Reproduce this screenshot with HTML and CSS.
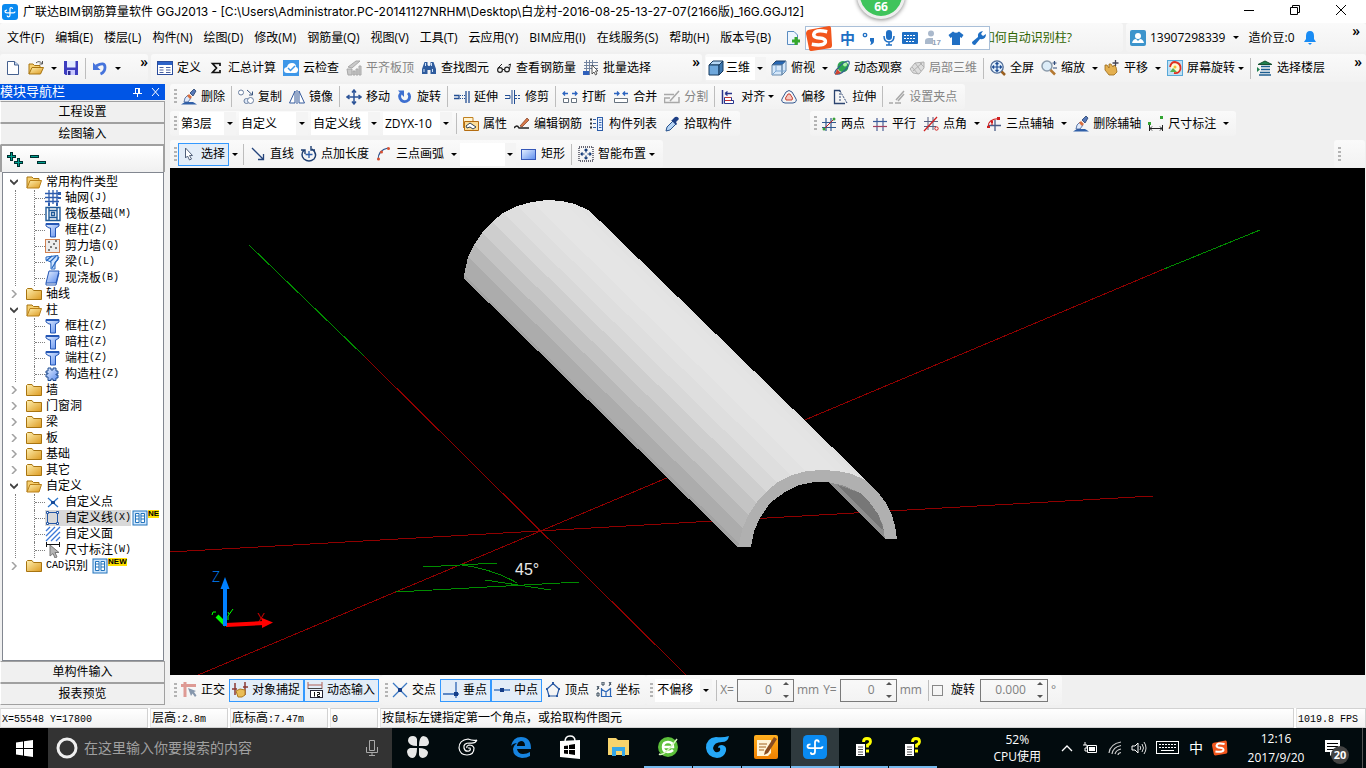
FILE: index.html
```html
<!DOCTYPE html>
<html lang="zh-CN">
<head>
    <meta charset="UTF-8">
    <meta name="viewport" content="width=device-width, initial-scale=1.0">
    <title>广联达BIM钢筋算量软件 GGJ2013</title>
    <link rel="stylesheet" href="styles.css">
</head>
<body>
    <!-- Iconos compartidos -->
    <svg class="sprite" width="0" height="0" aria-hidden="true">
        <defs>
            <linearGradient id="g-gold" x1="0" y1="0" x2="1" y2="1"><stop offset="0" stop-color="#fff0b0"/><stop offset="1" stop-color="#dc9a20"/></linearGradient>
            <linearGradient id="g-blue" x1="0" y1="0" x2="1" y2="1"><stop offset="0" stop-color="#e8f1ff"/><stop offset="1" stop-color="#5b8cee"/></linearGradient>
            <linearGradient id="g-orange" x1="0" y1="0" x2="0" y2="1"><stop offset="0" stop-color="#ffb020"/><stop offset="1" stop-color="#f08000"/></linearGradient>
        </defs>
        <symbol id="app" viewBox="0 0 16 16"><rect width="16" height="16" rx="3" fill="#0a8af0"/><path d="M10.500 5Q10.500 3.500 9.200 3.500Q8 3.500 8 5V11Q8 12.800 6.500 12.800Q5.200 12.800 5.200 11.500M5 6.200Q3 6.200 3 7.500Q3 8.800 5 8.800H11.500Q13 8.800 13 7.500" fill="none" stroke="#fff" stroke-width="1.200"/></symbol>
        <symbol id="new" viewBox="0 0 16 16"><path d="M2.500 1.500H9.500L13.500 5V14.500H2.500Z" fill="#fff" stroke="#46618f"/><path d="M9.500 1.500V5H13.500" fill="#c5d7f0" stroke="#46618f"/></symbol>
        <symbol id="folder-open" viewBox="0 0 16 16"><path d="M1 14V3H6L7.500 4.500H13V7" fill="#f7d070" stroke="#a87410"/><path d="M1 14L4 6.500H15.500L13 14Z" fill="url(#g-gold)" stroke="#b98018"/></symbol>
        <symbol id="open" viewBox="0 0 16 16"><path d="M1 14V4H5L6.500 5.500H12V8" fill="#f7d070" stroke="#a87410"/><path d="M1 14L4 7.500H15.500L12.500 14Z" fill="url(#g-gold)" stroke="#a87410"/><path d="M8 3Q11 0 14 3.500M14.500 1V4H11.500" fill="none" stroke="#555"/></symbol>
        <symbol id="folder" viewBox="0 0 16 16"><path d="M.5 13.500V3.500L1.500 2.500H6L7.500 4.500H15.500V13.500Z" fill="url(#g-gold)" stroke="#a87410"/></symbol>
        <symbol id="save" viewBox="0 0 16 16"><path d="M1 1H15V15H2.500L1 13.500Z" fill="#3d3dbf"/><path d="M4 1H12.500V7.500H4Z" fill="#e4ecff"/><path d="M4 10H12V15H4Z" fill="#c8c8ff"/><path d="M5 11H7.500V15H5Z" fill="#2d2d90"/></symbol>
        <symbol id="undo" viewBox="0 0 16 16"><path d="M4 6Q13 1 13 7.500Q13 12 8.500 14" fill="none" stroke="#4674dc" stroke-width="2.800"/><path d="M1 2.500V10H8.500Z" fill="#4674dc"/></symbol>
        <symbol id="define" viewBox="0 0 16 16"><rect x=".5" y="1.500" width="15" height="13" fill="#fff" stroke="#2a4c9c"/><path d="M1 2H15V5H1Z" fill="#2c62c8"/><path d="M2.500 7.500H6.500M9 7.500H13.500M2.500 10H6.500M9 10H13.500M2.500 12.500H6.500M9 12.500H13.500" stroke="#4860a0"/></symbol>
        <symbol id="sum" viewBox="0 0 16 16"><path d="M12 6V3.500H4.500L8.500 8L4.500 12.500H12V10" fill="none" stroke="#111" stroke-width="1.700"/></symbol>
        <symbol id="cloud" viewBox="0 0 16 16"><rect width="16" height="16" fill="#3e97e8"/><path d="M4 13Q1 13 1 10Q1 7.500 4 7Q5 3 9 3Q13 3 13 7Q15.500 8 15 10.500Q14.500 13 12 13Z" fill="#fff"/><path d="M5 8L7.500 10.500L12 6" fill="none" stroke="#3e97e8" stroke-width="1.500"/></symbol>
        <symbol id="flat" viewBox="0 0 16 16"><path d="M2 7L10 1L14 1L6 8ZM1 9H6V15H2ZM7 11H9V15H7ZM10 9H12V15H10ZM13 6H15V15H13Z" fill="#c9c9c9" stroke="#a8a8a8"/></symbol>
        <symbol id="find" viewBox="0 0 16 16"><path d="M3.500 2H6.500V5L7.500 6H8.500L9.500 5V2H12.500L15 9V14H9.500V10H6.500V14H1V9Z" fill="#2f5c9e"/><path d="M3 9V12M11.500 9V12M4.500 3V6M10.500 3V6" stroke="#cfe2fa"/></symbol>
        <symbol id="glasses" viewBox="0 0 16 16"><circle cx="4" cy="10" r="2.400" fill="none" stroke="#222" stroke-width="1.200"/><circle cx="11" cy="9.500" r="2.400" fill="none" stroke="#222" stroke-width="1.200"/><path d="M6.500 9.500H8.500M2 8L6 4M13.500 9L14.500 4L12.500 5" fill="none" stroke="#222"/></symbol>
        <symbol id="batch" viewBox="0 0 16 16"><path d="M1 2.500H15M1 5.500H15M1 8.500H15M3.500 0V15M6.500 0V15M9.500 0V8" stroke="#7385a0"/><path d="M0 11H6V15H0Z" fill="#2f60bb"/><path d="M9 5V14L11 12L12.500 15L14 14L12.500 11H15Z" fill="#fff" stroke="#333" stroke-width=".8"/></symbol>
        <symbol id="cube" viewBox="0 0 16 16"><path d="M1 5L5 1H15L11 5Z" fill="#b6d7f5" stroke="#173a5f"/><path d="M1 5H11V15H1Z" fill="#6fa8dc" stroke="#173a5f"/><path d="M11 5L15 1V11L11 15Z" fill="#3f78b0" stroke="#173a5f"/></symbol>
        <symbol id="topview" viewBox="0 0 16 16"><path d="M1 5L5 1H15L11 5Z" fill="#2968b4" stroke="#244468"/><path d="M1 5H11V15H1ZM11 5L15 1V11L11 15Z" fill="#d6e8fa" stroke="#6688aa"/><path d="M5 5V11H15M5 11L1 15" fill="none" stroke="#7aa6d2"/></symbol>
        <symbol id="orbit" viewBox="0 0 16 16"><circle cx="9" cy="6.500" r="5.500" fill="#2ea54e"/><circle cx="11" cy="4.500" r="2" fill="#aef0a8"/><path d="M2 14Q-1 13 4 8Q10 1 14 1Q17 2 13 8Q7 15 2 14" fill="none" stroke="#30618e" stroke-width="1.200"/><path d="M3 9L7 13L1 15Z" fill="#d04430"/></symbol>
        <symbol id="partview" viewBox="0 0 16 16"><path d="M1 9L6 3L15 2L15 8L10 14L4 13ZM4 11L13 3M6 3L12 11M3 7L9 14M10 2L15 7" fill="#ddd" stroke="#b0b0b0"/></symbol>
        <symbol id="full" viewBox="0 0 16 16"><circle cx="7" cy="7" r="6.200" fill="#e2effb" stroke="#4d6a96" stroke-width="1.300"/><path d="M7 2.500V11.500M2.500 7H11.500M5.500 4L7 2.500L8.500 4M5.500 10L7 11.500L8.500 10M4 5.500L2.500 7L4 8.500M10 5.500L11.500 7L10 8.500" fill="none" stroke="#1d4c94" stroke-width="1.200"/><path d="M11.500 11.500L15 15" stroke="#9a6020" stroke-width="2.500"/></symbol>
        <symbol id="zoom" viewBox="0 0 16 16"><circle cx="6" cy="6" r="5" fill="#dcecf8" stroke="#8c9cac" stroke-width="1.500"/><path d="M9.500 10L14 14.500" stroke="#b47830" stroke-width="2.500"/><path d="M13.500 1V5M11.500 3H15.500M12 8H16" stroke="#334e7c" stroke-width="1.200"/></symbol>
        <symbol id="hand" viewBox="0 0 16 16"><path d="M1 5L3 5L5 8L5 4L7 4L9 7L10 5L12 7L13 12L10 15H5L1 10Z" fill="#e4b050" stroke="#9a6a18" stroke-width=".8"/><path d="M11.500 0V6M8.500 3H14.500" stroke="#445" stroke-width="1.300"/></symbol>
        <symbol id="screenrot" viewBox="0 0 16 16"><rect x=".5" y=".5" width="15" height="15" fill="#bfe0f4" stroke="#58a8d8"/><path d="M3 7Q4 2 8 2Q14 3 13.500 9Q12 14 7 13" fill="#fff8d8" stroke="#e03020" stroke-width="1.800"/><path d="M3 12L6 8L10 12Z" fill="#55b050"/><circle cx="8" cy="7" r="1.500" fill="#f4c030"/></symbol>
        <symbol id="floor" viewBox="0 0 16 16"><path d="M1 4.500L8 1L15 4.500Z" fill="#208050" stroke="#145030"/><path d="M4 6.500H13M4 9.500H13M3 12.500H13M2 15H14" stroke="#1d5e90" stroke-width="1.500"/><path d="M0 7L3 9.500L0 12" fill="#208050"/></symbol>
        <symbol id="erase" viewBox="0 0 16 16"><path d="M0 15.500H16L12 13H4Z" fill="#2f5fa8"/><path d="M4 9L7 6L10 9L7 13H3Z" fill="#dfe9fa" stroke="#3a5a94" stroke-width=".8"/><path d="M6 7L8 5L11 8L9 10Z" fill="#d87040"/><path d="M9 4L13 0L15 2L12 7Z" fill="#5678b8" stroke="#24406c" stroke-width=".8"/></symbol>
        <symbol id="copy" viewBox="0 0 16 16"><circle cx="3" cy="3.500" r="2.500" fill="#fff" stroke="#6a7fa0"/><circle cx="8.500" cy="12" r="2.500" fill="#dce7f6" stroke="#6a7fa0"/><circle cx="12.500" cy="11.500" r="3" fill="#fff" stroke="#6a7fa0"/><path d="M9 1L14 5.500M14.500 2.500V6H11" fill="none" stroke="#3a557f"/></symbol>
        <symbol id="mirror" viewBox="0 0 16 16"><path d="M6 2V14H.5ZM10 2V14H15.500Z" fill="#fff" stroke="#355a9c"/><path d="M8 1V15" stroke="#355a9c"/></symbol>
        <symbol id="move" viewBox="0 0 16 16"><path d="M8 1V15M1 8H15M6 3.500L8 1L10 3.500M6 12.500L8 15L10 12.500M3.500 6L1 8L3.500 10M12.500 6L15 8L12.500 10" fill="none" stroke="#2d5498" stroke-width="1.500"/></symbol>
        <symbol id="rotate" viewBox="0 0 16 16"><path d="M4 4Q1 8 4.500 11.500Q8 14 11.500 11Q14 7 11 4" fill="none" stroke="#3d6fd0" stroke-width="2.800"/><path d="M1 1.500H7V8Z" fill="#3d6fd0"/></symbol>
        <symbol id="extend" viewBox="0 0 16 16"><path d="M0 6.500H5V9.500H0M12 2V14M15 2V14" fill="none" stroke="#244f94" stroke-width="1.300"/><path d="M6 6.500H11M6 9.500H11" stroke="#244f94" stroke-dasharray="1 1"/></symbol>
        <symbol id="trim" viewBox="0 0 16 16"><path d="M0 6.500H5V9.500H0M7 1V15M9.500 1V15" fill="none" stroke="#244f94"/><path d="M10 6.500H16M10 9.500H16" stroke="#244f94" stroke-dasharray="2 1"/></symbol>
        <symbol id="break" viewBox="0 0 16 16"><path d="M1 4.500H6M3 2.500L1 4.500L3 6.500M15 4.500H10M13 2.500L15 4.500L13 6.500" fill="none" stroke="#2d65c0" stroke-width="1.300"/><path d="M1.500 9.500H6.500V13.500H1.500ZM9.500 9.500H14.500V13.500H9.500Z" fill="#fff" stroke="#66727f"/></symbol>
        <symbol id="join" viewBox="0 0 16 16"><path d="M1 4.500H6M4 2.500L6 4.500L4 6.500M15 4.500H10M12 2.500L10 4.500L12 6.500" fill="none" stroke="#2d65c0" stroke-width="1.300"/><path d="M1.500 9.500H14.500V13.500H1.500Z" fill="#fff" stroke="#66727f"/></symbol>
        <symbol id="split" viewBox="0 0 16 16"><path d="M0 5.500H10M0 9H6M.5 9V13.500H15V8M15 2L6 12" fill="none" stroke="#a8a8a8" stroke-width="1.500"/></symbol>
        <symbol id="align" viewBox="0 0 16 16"><path d="M1.500 1V15" stroke="#28348c" stroke-width="1.500"/><path d="M4 4.500H11M4 4.500L6.500 2.500M4 4.500L6.500 6.500" fill="none" stroke="#28348c" stroke-width="1.300"/><path d="M3.500 8.500H10.500V11.500H3.500ZM3.500 11.500H12.500V14.500H3.500Z" fill="#fff" stroke="#28348c"/><path d="M4 8.500H10M4 11.500H10" stroke="#c03030"/></symbol>
        <symbol id="offset" viewBox="0 0 16 16"><path d="M4 14Q-1 13 1.500 9L5 3Q8 0 11 3L14.500 9Q17 13 12 14Z" fill="none" stroke="#345890"/><path d="M5 11L4.500 9L7 5H9L11.500 9L11 11Z" fill="#f6c8c0" stroke="#c84030"/></symbol>
        <symbol id="stretch" viewBox="0 0 16 16"><path d="M8 1.500H2.500V14.500H13" fill="none" stroke="#2b4470" stroke-width="1.300"/><path d="M8 1V12M8 2L15 14" stroke="#2b4470" stroke-dasharray="2 1"/></symbol>
        <symbol id="grip" viewBox="0 0 16 16"><path d="M0 14H4M6 14H12M7 11L15 2M9 12L15 5" stroke="#a8a8a8" stroke-width="1.500"/></symbol>
        <symbol id="props" viewBox="0 0 16 16"><path d="M.5 12V1.500H10V5" fill="#fff3d0" stroke="#c08020"/><path d="M1.500 14.500H15.500V5.500H1.500Z" fill="#fbdc96" stroke="#b46c10"/><path d="M3 10L7 7L13 11L10 13L7 11L4 12Z" fill="#fff" stroke="#345"/></symbol>
        <symbol id="rebar" viewBox="0 0 16 16"><path d="M0 12Q3 8 5 12H15" fill="none" stroke="#222" stroke-width="1.500"/><path d="M6 10L13 2L15 4L8 11Z" fill="#d87848" stroke="#7a3a20" stroke-width=".7"/></symbol>
        <symbol id="list" viewBox="0 0 16 16"><path d="M1 3.500H3M1 7.500H3M1 11.500H3" stroke="#333" stroke-width="2"/><path d="M4 3.500H7M4 7.500H7M4 11.500H7" stroke="#345ea0"/><rect x="8.500" y="1.500" width="5" height="13" fill="#eaf2ff" stroke="#2d5da8"/><path d="M10 4H12.500M10 6.500H12.500M10 9H12.500M10 11.500H12.500" stroke="#2d5da8"/></symbol>
        <symbol id="pick" viewBox="0 0 16 16"><path d="M2 15L3 11L9 5L12 8L6 14Z" fill="#b6d4f4" stroke="#24508c"/><path d="M8 4L11 1Q14 0 15 3L12 6L13 8L12 9L7 4Z" fill="#1e3f84"/></symbol>
        <symbol id="twopt" viewBox="0 0 16 16"><path d="M5 2V15M10 2V15M1 6.500H15M1 11.500H15" stroke="#31598f" stroke-width="1.200"/><path d="M2 14L14 2" stroke="#c02020"/><circle cx="13" cy="3" r="1.500" fill="#3aa03a"/><circle cx="3" cy="13" r="1.500" fill="#3aa03a"/></symbol>
        <symbol id="parallel" viewBox="0 0 16 16"><path d="M5 2V15M11 2V15" stroke="#4b5f95" stroke-width="1.200"/><path d="M1 5.500H15" stroke="#365c9c" stroke-width="1.200"/><path d="M1 10.500H15" stroke="#a04060" stroke-width="1.200"/></symbol>
        <symbol id="angle" viewBox="0 0 16 16"><path d="M5 1V14M10 1V14M1 5.500H15M1 10.500H13" stroke="#555f80"/><path d="M1 15L14 1" stroke="#d02020" stroke-width="1.300"/><circle cx="13.500" cy="12.500" r="1.700" fill="none" stroke="#d02020"/></symbol>
        <symbol id="threeaxis" viewBox="0 0 16 16"><path d="M9 4V15M2 9.500H15" stroke="#495b85" stroke-width="1.300"/><path d="M2 11Q2 3 13 2.500M6 4V9" fill="none" stroke="#d02020" stroke-width="1.200"/><path d="M1 10H4V12H1ZM5 5H7V7H5ZM11 1H14V4H11Z" fill="#d02020"/></symbol>
        <symbol id="dim" viewBox="0 0 16 16"><path d="M1.500 9V15M14.500 9V15M2 12.500H14M4 10.500L2 12.500L4 14.500M12 10.500L14 12.500L12 14.500" fill="none" stroke="#222"/><path d="M0 6H3V9H0ZM12 0H15V3H12Z" fill="#31a431"/></symbol>
        <symbol id="arrow" viewBox="0 0 16 16"><path d="M4.500 2V12L6.500 10L8.500 14L10.500 13L8.500 9.500H11.500Z" fill="#fff" stroke="#52617a"/></symbol>
        <symbol id="line" viewBox="0 0 16 16"><path d="M2 2L13 13M13.500 8V13.500H8" fill="none" stroke="#25447c" stroke-width="1.300"/></symbol>
        <symbol id="ptlen" viewBox="0 0 16 16"><path d="M8 5V12M4.500 8.500H11.500" stroke="#2d5da8" stroke-width="1.300"/><path d="M3 4Q-1 9 3 13Q8 17 13 13Q17 8 11 3M0 4H4V8M10 0V4H14" fill="none" stroke="#1d3d70" stroke-width="1.400"/></symbol>
        <symbol id="arc" viewBox="0 0 16 16"><path d="M2 14Q2 4 12 2" fill="none" stroke="#31548e" stroke-width="1.200"/><circle cx="2.500" cy="13" r="1.500" fill="#d85030"/><circle cx="5.500" cy="6" r="1.500" fill="#d85030"/><circle cx="12.500" cy="2.500" r="1.500" fill="#d85030"/></symbol>
        <symbol id="rect" viewBox="0 0 16 16"><rect x=".5" y="3.500" width="14" height="10" fill="url(#g-blue)" stroke="#3557b8"/></symbol>
        <symbol id="smart" viewBox="0 0 16 16"><rect x="1" y="1" width="14" height="14" fill="none" stroke="#334" stroke-width="1.300" stroke-dasharray="1 1"/><path d="M8 3V6.500M8 9.500V13M3 8H6.500M9.500 8H13M6.500 4.500L8 3L9.500 4.500M6.500 11.500L8 13L9.500 11.500M4.500 6.500L3 8L4.500 9.500M11.500 6.500L13 8L11.500 9.500" fill="none" stroke="#153c78" stroke-width="1.200"/></symbol>
        <symbol id="ortho" viewBox="0 0 16 16"><path d="M4 0V15M0 3.500H15" stroke="#de9a94" stroke-width="3"/><path d="M7 6L10 14L11.500 11.500L14 15L15.500 13.500L13 10L15 9Z" fill="#8797ac"/></symbol>
        <symbol id="snap" viewBox="0 0 16 16"><path d="M3 1V13M13 0V13M0 7H5M11 5H16" stroke="#8c3a34" stroke-width="1.500"/><path d="M4 9L8 7L13 8V13L10 15H6Z" fill="#e9bd57" stroke="#ae7a20"/></symbol>
        <symbol id="cross" viewBox="0 0 16 16"><path d="M1 1L15 15M15 1L1 15" stroke="#3b79c4" stroke-width="1.300"/><rect x="6" y="6" width="4" height="4" fill="#163e88"/></symbol>
        <symbol id="perp" viewBox="0 0 16 16"><path d="M13 0V16M0 12H16" stroke="#2f66b4" stroke-width="1.300"/><rect x="11" y="10" width="4" height="4" fill="#163e88"/></symbol>
        <symbol id="mid" viewBox="0 0 16 16"><path d="M0 8H16" stroke="#2f66b4" stroke-width="1.300"/><rect x="6" y="6" width="4" height="4" fill="#163e88"/></symbol>
        <symbol id="vertex" viewBox="0 0 16 16"><path d="M8 1.500L14 7L12 14H4L2 7Z" fill="none" stroke="#2b5aa4" stroke-width="1.200"/><path d="M7 0H9V3H7ZM1 6H3V8H1ZM13 6H15V8H13ZM3 13H5V15H3ZM11 13H13V15H11Z" fill="#2b5aa4"/></symbol>
        <symbol id="coord" viewBox="0 0 16 16"><path d="M5.500 6V14.500H16M5 7L10 10L15 6M10 10V14M14.500 7V14" fill="none" stroke="#2b66b8" stroke-width="1.200"/><path d="M1 4L3 7M3 4L1 8M6 0H8V3H6ZM13 0L15 3M15 0L13 4M1 11H3V14H1Z" fill="none" stroke="#345"/></symbol>
        <!-- árbol -->
        <symbol id="t-grid" viewBox="0 0 16 16"><path d="M4 0V14M8 0V14M12 0V14M0 3.500H14M0 7.500H14M0 11.500H14" stroke="#2c5cae" stroke-width="1.300"/><path d="M13 2H16V5H13ZM13 7H16V9H13ZM3 13H5V16H3ZM11 13H13V16H11Z" fill="#2c5cae"/></symbol>
        <symbol id="t-raft" viewBox="0 0 16 16"><path d="M1 1.500H15V14.500H1ZM4 4.500H12V11.500H4ZM4 1V4M12 1V4M4 12V15M12 12V15M6.500 6.500H9.500V9.500H6.500Z" fill="none" stroke="#1f5a98" stroke-width="1.400"/></symbol>
        <symbol id="t-col" viewBox="0 0 16 16"><path d="M1 1.500H14V4L11 6H10.500V15H5.500V6H4L1 4Z" fill="url(#g-blue)" stroke="#2456b4"/><path d="M1 2H14" stroke="#2456b4" stroke-width="2"/></symbol>
        <symbol id="t-wall" viewBox="0 0 16 16"><rect x=".5" y="1.500" width="14" height="13" fill="#ececec" stroke="#d08050"/><path d="M3 4H5M8 6H10M5 9H7M10 10H12M3 12H5M10 3H12" stroke="#555" stroke-width="1.500"/></symbol>
        <symbol id="t-beam" viewBox="0 0 16 16"><path d="M1 3L13 1.500V6L10 8V15H6V8L1 6Z" fill="#cfe4ff" stroke="#2768c0"/><path d="M1 7L7 2M7 14L14 3M5 8L11 2" stroke="#2768c0" stroke-width="1.300"/></symbol>
        <symbol id="t-slab" viewBox="0 0 16 16"><path d="M4 1H14L11 13H1Z" fill="url(#g-blue)" stroke="#2456b4"/><path d="M1 13V15H11L14 3" fill="none" stroke="#2456b4"/></symbol>
        <symbol id="t-struct" viewBox="0 0 16 16"><path d="M3 2H6V4H8V2H11V5H13V8H11V9H13V12H11V14.500H8V13H6V14.500H3V11H1V8H3V7H1V5H3Z" fill="url(#g-blue)" stroke="#1d4a90"/></symbol>
        <symbol id="t-point" viewBox="0 0 16 16"><path d="M3 4L13 13M13 4L3 13" stroke="#2c74c8" stroke-width="1.300"/><path d="M6 7H10V10H6Z" fill="#164a98"/></symbol>
        <symbol id="t-line" viewBox="0 0 16 16"><path d="M2.500 2.500H12.500V13.500H2.500Z" fill="none" stroke="#2456a4"/><path d="M1.500 1.500H3.500V3.500H1.500ZM11.500 1.500H13.500V3.500H11.500ZM1.500 12.500H3.500V14.500H1.500ZM11.500 12.500H13.500V14.500H11.500Z" fill="#fff" stroke="#2456a4"/></symbol>
        <symbol id="t-face" viewBox="0 0 16 16"><path d="M1 5L5 1M1 10L10 1M1 15L15 1M6 15L15 6M11 15L15 11" stroke="#3b78d8" stroke-width="1.300"/></symbol>
        <symbol id="t-dim" viewBox="0 0 16 16"><path d="M1.500 0V5M14.500 0V5M1 2.500H15" stroke="#111"/><path d="M5 3V14L8 11.500L10 16L12 15L10 10.500H14Z" fill="#b5b5b5" stroke="#777"/></symbol>
        <symbol id="t-book" viewBox="0 0 16 16"><rect x="1" y="1" width="14" height="14" fill="#cfe6fc" stroke="#2374bd"/><path d="M3.500 3.500H7V12.500H3.500ZM9 3.500H12.500V12.500H9ZM4 6H7M4 9H7M9 6H12M9 9H12" fill="#fff" stroke="#2374bd"/></symbol>
        <symbol id="minus" viewBox="0 0 8 8"><path d="M0 2L4 6L8 2" fill="none" stroke="#404040" stroke-width="1.800"/></symbol>
        <symbol id="plus" viewBox="0 0 8 8"><path d="M2 0L6 4L2 8" fill="none" stroke="#a0a0a0" stroke-width="1.500"/></symbol>
        <!-- barra de tareas -->
        <symbol id="sogou" viewBox="0 0 28 28"><path d="M3 5L24 1Q26 1 26 4L27 21Q27 24 24 24L6 27Q3 27 3 24L0 9Q0 6 3 5Z" fill="#f2561d"/><path d="M22 7Q9 4 8 10Q8 13 14 13.500Q21 14 20 18Q18 22 6 20" fill="none" stroke="#fff" stroke-width="3.600"/></symbol>
        <symbol id="help" viewBox="0 0 24 24"><path d="M4 9H13V21H4Z" fill="#fff"/><path d="M6 12H11M6 14.500H11M6 17H11M6 19.500H11" stroke="#555"/><path d="M11.500 7Q11.500 3.500 15 3.500Q18.500 3.500 18.500 6.500Q18.500 9 15.500 10V12.500" fill="none" stroke="#ff0" stroke-width="2.800"/><path d="M14 14.500H17V17.500H14Z" fill="#ff0"/></symbol>
        <symbol id="swirl" viewBox="0 0 24 24"><path d="M22 5Q20 9 15 8Q8 8 9 13Q10 17 14 16Q16 15 15 13H13M22 5Q18 6 13 4Q4 5 4 13Q5 20 12 20Q19 20 19 13Q18 10 14 10Q11 11 12 13" fill="none" stroke="currentColor" stroke-width="1.200"/></symbol>
    </svg>

    <header class="titlebar">
        <svg class="icon"><use href="#app"/></svg>
        <h1>广联达BIM钢筋算量软件 GGJ2013 - [C:\Users\Administrator.PC-20141127NRHM\Desktop\白龙村-2016-08-25-13-27-07(2166版)_16G.GGJ12]</h1>
        <div class="window-controls">
            <button type="button" aria-label="最小化"><svg width="12" height="12"><path d="M1 6.500H11" stroke="#000"/></svg></button>
            <button type="button" aria-label="还原"><svg width="12" height="12"><path d="M1.500 3.500H8.500V10.500H1.500ZM3.500 3.500V1.500H10.500V8.500H8.500" fill="none" stroke="#000"/></svg></button>
            <button type="button" aria-label="关闭"><svg width="12" height="12"><path d="M1 1L11 11M11 1L1 11" stroke="#000"/></svg></button>
        </div>
        <div class="ball">66</div>
    </header>

    <div class="bar-row menu-row">
        <nav class="bar menu">
            <a href="#">文件(F)</a><a href="#">编辑(E)</a><a href="#">楼层(L)</a><a href="#">构件(N)</a><a href="#">绘图(D)</a><a href="#">修改(M)</a><a href="#">钢筋量(Q)</a><a href="#">视图(V)</a><a href="#">工具(T)</a><a href="#">云应用(Y)</a><a href="#">BIM应用(I)</a><a href="#">在线服务(S)</a><a href="#">帮助(H)</a><a href="#">版本号(B)</a>
            <svg class="icon" viewBox="0 0 16 16"><path d="M2.500 1.500H9L12.500 5V14.500H2.500Z" fill="#eef6ff" stroke="#5a8cc0"/><path d="M11 7V15M7 11H15" stroke="#35a82a" stroke-width="3"/></svg>
            <a href="#" class="tip">如何自动识别柱?</a>
        </nav>
        <div class="bar account">
            <svg class="icon" viewBox="0 0 16 16"><rect width="16" height="16" rx="2" fill="#3c94cc"/><circle cx="8" cy="6" r="3" fill="#fff"/><path d="M2 13Q3 9 6 9L8 11L10 9Q13 9 14 13Z" fill="#fff"/></svg>
            <button type="button" class="phone">13907298339<i class="caret"></i></button>
            <span>造价豆:0</span>
            <svg class="bell" width="14" height="16" viewBox="0 0 14 16"><path d="M7 1Q11 1 11 6V9L13 12H1L3 9V6Q3 1 7 1ZM5 13H9L7 15Z" fill="#1a8cf4"/></svg>
            <span class="more">»</span>
        </div>
        <div class="ime">
            <svg class="ime-logo" viewBox="0 0 28 28"><use href="#sogou"/></svg>
            <b>中</b>
            <svg width="14" height="16" viewBox="0 0 14 16"><circle cx="3" cy="5" r="1.700" fill="none" stroke="#1f6fc4" stroke-width="1.300"/><path d="M8 8H12V11Q12 14 8 15Q10 12 8 11Z" fill="#1f6fc4"/></svg>
            <svg width="12" height="16" viewBox="0 0 12 16"><rect x="3" y="0" width="6" height="10" rx="3" fill="#1f6fc4"/><path d="M1 6Q1 12 6 12Q11 12 11 6M6 12V15M3 15H9" fill="none" stroke="#1f6fc4" stroke-width="1.500"/></svg>
            <svg width="16" height="16" viewBox="0 0 16 16"><rect y="2" width="16" height="12" rx="1" fill="#1f6fc4"/><path d="M2 5.500H14M2 8.500H14M4 11.500H12" stroke="#fff" stroke-dasharray="2 1"/></svg>
            <svg width="16" height="16" viewBox="0 0 16 16"><circle cx="6" cy="3.500" r="3" fill="#aab9cc"/><path d="M0 14V11Q0 8 4 8H8V14Z" fill="#aab9cc"/><text class="day" x="7" y="15">17</text></svg>
            <svg width="16" height="16" viewBox="0 0 16 16"><path d="M5 1.500Q8 4 11 1.500L15.500 5L13.500 8L12 7V15H4V7L2.500 8L.5 5Z" fill="#1f6fc4"/></svg>
            <svg width="16" height="16" viewBox="0 0 16 16"><path d="M1 12L7 7Q6 2 12 1L10 4L12 6L15 4Q15 10 9 9L4 15Q1 15 1 12Z" fill="#1f6fc4"/></svg>
        </div>
    </div>

    <div class="bar-row tools-row">
        <div class="bar bar-file">
            <button type="button" class="tool" aria-label="新建"><svg class="icon"><use href="#new"/></svg></button>
            <button type="button" class="tool" aria-label="打开"><svg class="icon"><use href="#open"/></svg></button><i class="drop"></i>
            <button type="button" class="tool" aria-label="保存"><svg class="icon"><use href="#save"/></svg></button><i class="sep"></i>
            <button type="button" class="tool" aria-label="撤销"><svg class="icon"><use href="#undo"/></svg></button><i class="drop"></i>
            <span class="more">»</span>
        </div>
        <div class="bar bar-main">
            <button type="button" class="tool"><svg class="icon"><use href="#define"/></svg>定义</button>
            <button type="button" class="tool"><svg class="icon"><use href="#sum"/></svg>汇总计算</button>
            <button type="button" class="tool"><svg class="icon"><use href="#cloud"/></svg>云检查</button>
            <button type="button" class="tool off"><svg class="icon"><use href="#flat"/></svg>平齐板顶</button>
            <button type="button" class="tool"><svg class="icon"><use href="#find"/></svg>查找图元</button>
            <button type="button" class="tool"><svg class="icon"><use href="#glasses"/></svg>查看钢筋量</button>
            <button type="button" class="tool"><svg class="icon"><use href="#batch"/></svg>批量选择</button>
            <span class="more">»</span>
        </div>
        <div class="bar bar-view">
            <label class="combo view"><svg class="icon"><use href="#cube"/></svg><select aria-label="视图"><option>三维</option></select></label>
            <button type="button" class="tool"><svg class="icon"><use href="#topview"/></svg>俯视</button><i class="drop"></i>
            <button type="button" class="tool"><svg class="icon"><use href="#orbit"/></svg>动态观察</button>
            <button type="button" class="tool off"><svg class="icon"><use href="#partview"/></svg>局部三维</button><i class="sep"></i>
            <button type="button" class="tool"><svg class="icon"><use href="#full"/></svg>全屏</button>
            <button type="button" class="tool"><svg class="icon"><use href="#zoom"/></svg>缩放</button><i class="drop"></i>
            <button type="button" class="tool"><svg class="icon"><use href="#hand"/></svg>平移</button><i class="drop"></i>
            <button type="button" class="tool"><svg class="icon"><use href="#screenrot"/></svg>屏幕旋转<i class="caret"></i></button><i class="sep"></i>
            <button type="button" class="tool"><svg class="icon"><use href="#floor"/></svg>选择楼层</button>
            <span class="more">»</span>
        </div>
    </div>

    <div class="workspace">
        <aside class="sidebar">
            <div class="side-title">模块导航栏
                <svg width="9" height="10"><path d="M2 1.500H7M2.500 1V6M5.500 1V6M6.500 1V6M0 6.500H9M4.500 6V10" stroke="#fff"/></svg>
                <svg width="9" height="10"><path d="M1 1L8 9M8 1L1 9" stroke="#fff"/></svg>
            </div>
            <button type="button" class="side-btn">工程设置</button>
            <button type="button" class="side-btn">绘图输入</button>
            <div class="side-tools">
                <svg width="40" height="16" viewBox="0 0 40 16"><path d="M4.500 0V9M0 4.500H9M11.500 6V15M7 10.500H16" stroke="#003030" stroke-width="3"/><path d="M4.500 1V8M1 4.500H8M11.500 7V14M8 10.500H15" stroke="#00a090"/><path d="M23 4.500H32M30 10.500H39" stroke="#003030" stroke-width="3"/><path d="M24 4.500H31M31 10.500H38" stroke="#00a090"/></svg>
            </div>
            <ul class="tree">
                <li><div class="node"><svg class="exp"><use href="#minus"/></svg><svg class="icon"><use href="#folder-open"/></svg>常用构件类型</div>
                    <ul>
                        <li><svg class="icon"><use href="#t-grid"/></svg>轴网<kbd>(J)</kbd></li>
                        <li><svg class="icon"><use href="#t-raft"/></svg>筏板基础<kbd>(M)</kbd></li>
                        <li><svg class="icon"><use href="#t-col"/></svg>框柱<kbd>(Z)</kbd></li>
                        <li><svg class="icon"><use href="#t-wall"/></svg>剪力墙<kbd>(Q)</kbd></li>
                        <li><svg class="icon"><use href="#t-beam"/></svg>梁<kbd>(L)</kbd></li>
                        <li><svg class="icon"><use href="#t-slab"/></svg>现浇板<kbd>(B)</kbd></li>
                    </ul>
                </li>
                <li><div class="node"><svg class="exp"><use href="#plus"/></svg><svg class="icon"><use href="#folder"/></svg>轴线</div></li>
                <li><div class="node"><svg class="exp"><use href="#minus"/></svg><svg class="icon"><use href="#folder-open"/></svg>柱</div>
                    <ul>
                        <li><svg class="icon"><use href="#t-col"/></svg>框柱<kbd>(Z)</kbd></li>
                        <li><svg class="icon"><use href="#t-col"/></svg>暗柱<kbd>(Z)</kbd></li>
                        <li><svg class="icon"><use href="#t-col"/></svg>端柱<kbd>(Z)</kbd></li>
                        <li><svg class="icon"><use href="#t-struct"/></svg>构造柱<kbd>(Z)</kbd></li>
                    </ul>
                </li>
                <li><div class="node"><svg class="exp"><use href="#plus"/></svg><svg class="icon"><use href="#folder"/></svg>墙</div></li>
                <li><div class="node"><svg class="exp"><use href="#plus"/></svg><svg class="icon"><use href="#folder"/></svg>门窗洞</div></li>
                <li><div class="node"><svg class="exp"><use href="#plus"/></svg><svg class="icon"><use href="#folder"/></svg>梁</div></li>
                <li><div class="node"><svg class="exp"><use href="#plus"/></svg><svg class="icon"><use href="#folder"/></svg>板</div></li>
                <li><div class="node"><svg class="exp"><use href="#plus"/></svg><svg class="icon"><use href="#folder"/></svg>基础</div></li>
                <li><div class="node"><svg class="exp"><use href="#plus"/></svg><svg class="icon"><use href="#folder"/></svg>其它</div></li>
                <li><div class="node"><svg class="exp"><use href="#minus"/></svg><svg class="icon"><use href="#folder-open"/></svg>自定义</div>
                    <ul>
                        <li><svg class="icon"><use href="#t-point"/></svg>自定义点</li>
                        <li><span class="selected"><svg class="icon"><use href="#t-line"/></svg>自定义线<kbd>(X)</kbd></span><svg class="icon"><use href="#t-book"/></svg><em>NE</em></li>
                        <li><svg class="icon"><use href="#t-face"/></svg>自定义面</li>
                        <li><svg class="icon"><use href="#t-dim"/></svg>尺寸标注<kbd>(W)</kbd></li>
                    </ul>
                </li>
                <li><div class="node"><svg class="exp"><use href="#plus"/></svg><svg class="icon"><use href="#folder"/></svg><kbd>CAD</kbd>识别<svg class="icon book"><use href="#t-book"/></svg><em>NEW</em></div></li>
            </ul>
            <button type="button" class="side-btn">单构件输入</button>
            <button type="button" class="side-btn">报表预览</button>
        </aside>

        <main class="content">
            <div class="bar-row">
                <div class="bar">
                    <i class="grip"></i>
                    <button type="button" class="tool"><svg class="icon"><use href="#erase"/></svg>删除</button><i class="sep"></i>
                    <button type="button" class="tool"><svg class="icon"><use href="#copy"/></svg>复制</button>
                    <button type="button" class="tool"><svg class="icon"><use href="#mirror"/></svg>镜像</button><i class="sep"></i>
                    <button type="button" class="tool"><svg class="icon"><use href="#move"/></svg>移动</button>
                    <button type="button" class="tool"><svg class="icon"><use href="#rotate"/></svg>旋转</button><i class="sep"></i>
                    <button type="button" class="tool"><svg class="icon"><use href="#extend"/></svg>延伸</button>
                    <button type="button" class="tool"><svg class="icon"><use href="#trim"/></svg>修剪</button><i class="sep"></i>
                    <button type="button" class="tool"><svg class="icon"><use href="#break"/></svg>打断</button>
                    <button type="button" class="tool"><svg class="icon"><use href="#join"/></svg>合并</button>
                    <button type="button" class="tool off"><svg class="icon"><use href="#split"/></svg>分割</button><i class="sep"></i>
                    <button type="button" class="tool"><svg class="icon"><use href="#align"/></svg>对齐<i class="caret"></i></button>
                    <button type="button" class="tool"><svg class="icon"><use href="#offset"/></svg>偏移</button>
                    <button type="button" class="tool"><svg class="icon"><use href="#stretch"/></svg>拉伸</button><i class="sep"></i>
                    <button type="button" class="tool off"><svg class="icon"><use href="#grip"/></svg>设置夹点</button>
                </div>
            </div>
            <div class="bar-row">
                <div class="bar bar-component">
                    <i class="grip"></i>
                    <label class="combo short"><select aria-label="楼层"><option>第3层</option></select></label>
                    <label class="combo"><select aria-label="类别"><option>自定义</option></select></label>
                    <label class="combo"><select aria-label="构件类型"><option>自定义线</option></select></label>
                    <label class="combo"><select aria-label="构件"><option>ZDYX-10</option></select></label><i class="sep"></i>
                    <button type="button" class="tool"><svg class="icon"><use href="#props"/></svg>属性</button>
                    <button type="button" class="tool"><svg class="icon"><use href="#rebar"/></svg>编辑钢筋</button>
                    <button type="button" class="tool"><svg class="icon"><use href="#list"/></svg>构件列表</button>
                    <button type="button" class="tool"><svg class="icon"><use href="#pick"/></svg>拾取构件</button>
                </div>
                <div class="bar">
                    <i class="grip"></i>
                    <button type="button" class="tool"><svg class="icon"><use href="#twopt"/></svg>两点</button>
                    <button type="button" class="tool"><svg class="icon"><use href="#parallel"/></svg>平行</button>
                    <button type="button" class="tool"><svg class="icon"><use href="#angle"/></svg>点角</button><i class="drop"></i>
                    <button type="button" class="tool"><svg class="icon"><use href="#threeaxis"/></svg>三点辅轴</button><i class="drop"></i>
                    <button type="button" class="tool"><svg class="icon"><use href="#erase"/></svg>删除辅轴</button>
                    <button type="button" class="tool"><svg class="icon"><use href="#dim"/></svg>尺寸标注</button><i class="drop"></i>
                </div>
            </div>
            <div class="bar-row draw-row">
                <div class="bar">
                    <i class="grip"></i>
                    <button type="button" class="tool active"><svg class="icon"><use href="#arrow"/></svg>选择</button><i class="drop"></i><i class="sep"></i>
                    <button type="button" class="tool"><svg class="icon"><use href="#line"/></svg>直线</button>
                    <button type="button" class="tool"><svg class="icon"><use href="#ptlen"/></svg>点加长度</button>
                    <button type="button" class="tool"><svg class="icon"><use href="#arc"/></svg>三点画弧</button><i class="drop"></i>
                    <label class="combo short blank"><select aria-label="参数"><option></option></select></label>
                    <button type="button" class="tool"><svg class="icon"><use href="#rect"/></svg>矩形</button><i class="sep"></i>
                    <button type="button" class="tool"><svg class="icon"><use href="#smart"/></svg>智能布置<i class="caret"></i></button>
                </div>
                <div class="bar bar-empty"><i class="grip"></i></div>
            </div>

            <svg class="viewport" viewBox="170 168 1195 507" preserveAspectRatio="xMinYMin slice">
                <g fill="none" stroke="#900000" shape-rendering="crispEdges">
                    <path d="M364 356L686 675M198 675L1164 269M170 552L1153 496"/>
                    <path stroke="#008c00" d="M249 245L364 356M1164 269L1260 230M423 567L497 563M396 592L579 582M485 580L551 590M462 565Q493 569 517 583"/>
                </g>
                <text class="deg" x="515" y="575">45°</text>
                <!-- bóveda: una tira por faceta -->
                <g shape-rendering="crispEdges">
                    <path fill="#a3a3a3" d="M463.500 278L466 267L741 537L738 547Z"/>
                    <path fill="#acacac" d="M464 275L468 257L743 527L740 544Z"/>
                    <path fill="#b8b8b8" d="M468 257L474 245L749 515L743 528Z"/>
                    <path fill="#c4c4c4" d="M474 245L482 233L757 503L749 515Z"/>
                    <path fill="#cecece" d="M482 233L492 222L767 492L757 503Z"/>
                    <path fill="#d8d8d8" d="M492 222L503 213L778 483L767 492Z"/>
                    <path fill="#dedede" d="M503 213L517 206L792 476L778 483Z"/>
                    <path fill="#e2e2e2" d="M517 206L532 202L807 472L792 476Z"/>
                    <path fill="#e5e5e5" d="M532 202L547 200L562 201L837 471L822 471L807 472Z"/>
                    <path fill="#e4e4e4" d="M562 201L575 204L850 474L837 471Z"/>
                    <path fill="#e2e2e2" d="M575 204L588 210L863 480L850 474Z"/>
                    <path fill="#dedede" d="M588 210L600 221L870 484L875 490L863 480Z"/>
                    <path fill="#8e8e8e" d="M828 482L885 539L883 525L878 514L870 503L860 493L845 486Z"/>
                    <path fill="#777" d="M838 485L880 528L884 530L878 514L870 503L860 493Z"/>
                    <path fill="#b0b0b0" d="M738 547L743 527L749 514L757 502L767 491L778 482L792 475L807 471L822 470L838 471L852 474L865 480L877 491L886 503L892 515L895 526L897 539H885L883 525L878 514L870 503L860 493L845 486L828 482H815L799 485L785 492L770 503L760 518L754 531L751 547Z"/>
                </g>
                <!-- ejes -->
                <path d="M226 625L217 616" stroke="#0f0" stroke-width="4"/>
                <path d="M226 625L264 623" stroke="#f00" stroke-width="4"/>
                <path d="M225 626V587" stroke="#0080ff" stroke-width="4"/>
                <path fill="#f00" d="M262 618L273 622.500L262 628Z"/>
                <path fill="#0080ff" d="M220.500 589L225 577L229.500 589Z"/>
                <path d="M212 615L213 612H216" fill="none" stroke="#0f0"/>
                <text class="axis" x="212" y="582" fill="#0080ff">Z</text>
                <text class="axis" x="257" y="624" fill="#f00">X</text>
                <path d="M228 612L229 614M233 609L228 616V620" fill="none" stroke="#0f0"/>
            </svg>

            <div class="bar-row snap-row">
                <div class="bar">
                    <i class="grip"></i>
                    <button type="button" class="tool"><svg class="icon"><use href="#ortho"/></svg>正交</button>
                    <button type="button" class="tool active"><svg class="icon"><use href="#snap"/></svg>对象捕捉</button>
                    <button type="button" class="tool active"><svg class="icon" viewBox="0 0 16 16"><path d="M1 0V7M15 0V7M1 3H15" stroke="#af6058"/><path d="M1 6.500H15" stroke="#444"/><rect x="3.500" y="8.500" width="12" height="7" fill="#fff" stroke="#223"/><path d="M7.500 10V14.500M10 10.500H12.500V12.500H10.500V14.500H13" fill="none" stroke="#111"/></svg>动态输入</button>
                </div>
                <div class="bar">
                    <i class="grip"></i>
                    <button type="button" class="tool"><svg class="icon"><use href="#cross"/></svg>交点</button>
                    <button type="button" class="tool active"><svg class="icon"><use href="#perp"/></svg>垂点</button>
                    <button type="button" class="tool active"><svg class="icon"><use href="#mid"/></svg>中点</button>
                    <button type="button" class="tool"><svg class="icon"><use href="#vertex"/></svg>顶点</button>
                    <button type="button" class="tool"><svg class="icon"><use href="#coord"/></svg>坐标</button>
                </div>
                <div class="bar bar-offset">
                    <i class="grip"></i>
                    <label class="combo short"><select aria-label="偏移方式"><option>不偏移</option></select></label><i class="sep"></i>
                    <label class="num">X=<span class="spin"><input type="text" value="0"><i></i></span>mm</label>
                    <label class="num">Y=<span class="spin"><input type="text" value="0"><i></i></span>mm</label><i class="sep"></i>
                    <label class="check"><input type="checkbox">旋转</label>
                    <label class="num"><span class="spin wide"><input type="text" value="0.000" aria-label="旋转角度"><i></i></span>°</label>
                </div>
            </div>
        </main>
    </div>

    <footer class="status">
        <span class="st-xy"><kbd>X=55548 Y=17800</kbd></span>
        <span class="st-floor">层高<kbd>:2.8m</kbd></span>
        <span class="st-base">底标高<kbd>:7.47m</kbd></span>
        <span class="st-zero"><kbd>0</kbd></span>
        <span class="st-hint">按鼠标左键指定第一个角点，或拾取构件图元</span>
        <span class="st-fps"><kbd>1019.8 FPS</kbd></span>
    </footer>

    <div class="taskbar">
        <button type="button" class="start" aria-label="开始"><svg width="17" height="17" viewBox="0 0 17 17"><path d="M0 2.500L7 1.500V8H0ZM8 1.300L17 0V8H8ZM0 9H7V15.500L0 14.500ZM8 9H17V17L8 15.700Z" fill="#fff"/></svg></button>
        <label class="search">
            <svg width="22" height="22"><circle cx="11" cy="11" r="9" fill="none" stroke="#eee" stroke-width="3"/></svg>
            <input type="text" placeholder="在这里输入你要搜索的内容">
            <svg width="12" height="16"><path d="M3.500.5H8.500V10.500H3.500ZM.5 7V12.500H11.500V7M6 13V16M3 15.500H9" fill="none" stroke="#aaa"/></svg>
        </label>
        <div class="apps">
            <button type="button"><svg viewBox="0 0 24 24"><path d="M11 11V4Q10 1 7 1Q2 1 2 6Q3 11 11 11ZM13 11H20Q23 10 23 7Q22 1 17 1Q13 2 13 11ZM13 13V20Q14 23 17 23Q22 22 22 17Q20 13 13 13ZM11 13H4Q1 14 1 17Q2 23 7 23Q11 22 11 13Z" fill="#e8e8e8"/></svg></button>
            <button type="button" class="last-tool"><svg viewBox="0 0 24 24" class="white"><use href="#swirl"/></svg></button>
            <button type="button"><svg viewBox="0 0 24 24"><path d="M2 11Q4 2 12 2Q22 2 22 14H8Q9 19 14 19Q18 19 21 17V21Q18 23 13 23Q4 22 4 14Q5 9 9 8Q4 8 2 11ZM8 11H16Q16 6 12 6Q8 7 8 11Z" fill="#1683e0"/></svg></button>
            <button type="button"><svg viewBox="0 0 24 24"><path d="M2 6L22 5V24L2 22Z" fill="#fff"/><path d="M7 7Q7 1 12 1Q17 1 17 6" fill="none" stroke="#fff" stroke-width="1.500"/><path d="M6 11L10 10.500V14H6ZM11 10L17 9V14H11ZM6 15H10V19L6 18.500ZM11 15H17V20L11 19Z" fill="#000"/></svg></button>
            <button type="button"><svg viewBox="0 0 24 24"><path d="M1 3H9L11 5H22V20H1Z" fill="#f7d46c"/><path d="M5 21V12H18V21H15V16H9V21Z" fill="#35a7e8"/></svg></button>
            <button type="button" class="run"><svg viewBox="0 0 24 24"><circle cx="12" cy="12" r="10" fill="#5cbf3a"/><path d="M7 12H17Q17 7 12 7Q7 7 7 12Q7 17 12 17Q15 17 17 15" fill="none" stroke="#fff" stroke-width="2.500"/><path d="M3 19Q8 22 21 4" fill="none" stroke="#d8f4c0" stroke-width="1.500"/></svg></button>
            <button type="button" class="run"><svg viewBox="0 0 24 24"><path d="M24 1Q23 7 17 7Q9 7 8 13Q9 18 13 17Q16 16 15 13Q14 12 13 13Q13 10 17 10Q22 11 21 16Q19 23 12 23Q2 22 1 13Q1 3 11 2Q18 3 24 1Z" fill="#25a8f8"/></svg></button>
            <button type="button" class="run"><svg viewBox="0 0 24 24"><rect width="24" height="24" rx="2" fill="url(#g-orange)"/><path d="M3 5H17V18L14 21H3Z" fill="#fff4d8"/><path d="M5 9H13M5 12H12M5 15H10" stroke="#a06020"/><path d="M11 16L20 2L23 4L14 18L10 20Z" fill="#8a4c20"/></svg></button>
            <button type="button" class="run current"><svg viewBox="0 0 16 16"><use href="#app"/></svg></button>
            <button type="button" class="run"><svg viewBox="0 0 24 24"><use href="#help"/></svg></button>
            <button type="button" class="run"><svg viewBox="0 0 24 24"><use href="#help"/></svg></button>
        </div>
        <div class="cpu">52%<br>CPU使用</div>
        <div class="tray">
            <svg width="12" height="16"><path d="M1 11L6 6L11 11" fill="none" stroke="#fff" stroke-width="1.300"/></svg>
            <svg width="16" height="16"><path d="M5.500 5.500H14.500V12.500H5.500ZM3 2V5M1 5H5V8H3V11H6" fill="none" stroke="#fff"/><path d="M7 7H13V11H7Z" fill="#fff"/></svg>
            <svg width="15" height="16"><path d="M2 13Q3 4 14 2M5 14Q6 7 14 5.500M8 14Q9 10 14 9M11 15Q11 13 14 12.500" fill="none" stroke="#ccc" stroke-width="1.200"/></svg>
            <svg width="16" height="16"><path d="M1 6H4L7 3V13L4 10H1Z" fill="none" stroke="#fff"/><path d="M9 6Q10.500 8 9 10M11 4Q14 8 11 12M13 2Q17 8 13 14" fill="none" stroke="#ddd"/></svg>
            <svg class="keys" width="24" height="16"><rect x=".5" y="1.500" width="22" height="12" fill="none" stroke="#fff"/><path d="M3 4.500H21M3 7.500H21" stroke="#fff" stroke-dasharray="2 1"/><path d="M5 10.500H18" stroke="#fff"/></svg>
            <b>中</b>
            <svg width="16" height="16" viewBox="0 0 28 28"><use href="#sogou"/></svg>
        </div>
        <div class="clock">12:16<br>2017/9/20</div>
        <button type="button" class="notify" aria-label="通知"><svg width="18" height="18"><path d="M1 1H16V13H10L6 17V13H1Z" fill="#fff"/><path d="M3 4.500H14M3 7.500H14M3 10.500H11" stroke="#000"/></svg><span>20</span></button>
    </div>
</body>
</html>
```
FILE: styles.css
```css
* {
    box-sizing: border-box;
}
body {
    margin: 0;
    height: 100vh;
    display: flex;
    flex-direction: column;
    overflow: hidden;
    background-color: #f0f0f0;
    color: #000;
    font: 12px/16px "Open Sans", "Noto Sans CJK SC", sans-serif;
}
button, input, select {
    font: inherit;
    color: inherit;
    margin: 0;
}
button {
    border: none;
    background: none;
    padding: 0;
    white-space: nowrap;
}
a {
    color: inherit;
    text-decoration: none;
}
svg {
    flex: none;
}
.sprite {
    position: absolute;
}
.icon {
    width: 16px;
    height: 16px;
}

/* Barra de título */
.titlebar {
    position: relative;
    flex: none;
    display: flex;
    align-items: center;
    gap: 5px;
    height: 23px;
    padding-left: 2px;
    background-color: #fff;
}
.titlebar h1 {
    margin: 0;
    font: 12px/16px Inter, "Noto Sans CJK SC", sans-serif;
    white-space: nowrap;
}
.window-controls {
    display: flex;
    margin-left: auto;
    padding-right: 2px;
}
.window-controls button {
    width: 46px;
    height: 20px;
}
.ball {
    position: absolute;
    top: -29px;
    left: 857px;
    z-index: 3;
    width: 48px;
    height: 48px;
    padding-top: 25px;
    border: 3px solid #eee;
    border-radius: 50%;
    background-color: #3fc45c;
    box-shadow: 0 1px 4px #888;
    color: #fff;
    font-weight: bold;
    text-align: center;
}

/* Barras de herramientas */
.bar-row {
    position: relative;
    flex: none;
    display: flex;
    gap: 3px;
    height: 27px;
    padding-bottom: 2px;
}
.bar {
    display: flex;
    align-items: center;
    padding-right: 4px;
    border-radius: 3px;
    background: linear-gradient(#fafafa, #f2f2f2);
    white-space: nowrap;
}
.menu-row {
    height: 30px;
    padding-bottom: 1px;
}
.menu {
    flex: 0 0 1123px;
    padding-left: 2px;
}
.menu a {
    padding: 0 6px 0 5px;
}
.menu .icon {
    margin-left: 8px;
}
.menu .tip {
    margin-left: auto;
    margin-right: 41px;
    color: #2f6400;
}
.account {
    flex: 1;
    padding-left: 4px;
    gap: 4px;
}
.account .phone {
    display: flex;
    align-items: center;
    gap: 8px;
    margin-right: 5px;
}
.account .bell {
    margin-left: 4px;
}
.more {
    align-self: flex-start;
    margin-left: auto;
    font-size: 14px;
    font-weight: 600;
}
.account .more {
    padding-right: 2px;
}
.ime {
    position: absolute;
    left: 805px;
    top: 3px;
    z-index: 2;
    display: flex;
    align-items: center;
    gap: 7px;
    height: 24px;
    padding-right: 2px;
    border: 1px solid #a9bfd8;
    background-color: #fff;
    color: #1f6fc4;
}
.ime b {
    font-size: 15px;
}
.ime .day {
    font: bold 8px "Liberation Sans", sans-serif;
    fill: #8fa2ba;
}
.ime-logo {
    width: 27px;
    height: 27px;
}
.tools-row {
    height: 31px;
    padding: 1px 0 2px;
}
.bar-file {
    flex: 0 0 148px;
    padding: 0 0 0 2px;
}
.bar-main {
    flex: 0 0 551px;
    padding-left: 3px;
    padding-right: 2px;
}
.bar-view {
    flex: 1;
    padding-right: 4px;
}
.tool {
    display: flex;
    align-items: center;
    gap: 4px;
    height: 23px;
    padding: 0 3px 0 2px;
    border: 1px solid transparent;
}
.tool.active {
    border-color: #3399ff;
    background-color: #e3edf8;
}
.tool.off {
    color: #858585;
}
.tool .caret {
    margin-left: -1px;
}
.caret {
    border: 3px solid transparent;
    border-top-color: #000;
    border-bottom: none;
}
.drop {
    display: flex;
    justify-content: center;
    width: 12px;
}
.drop::before {
    content: "";
    border: 3px solid transparent;
    border-top-color: #000;
    border-bottom: none;
}
.sep {
    width: 1px;
    height: 21px;
    margin: 0 3px 0 2px;
    background-color: #bdbdbd;
}
.grip {
    width: 3px;
    height: 15px;
    margin: 0 1px 0 4px;
    background: repeating-linear-gradient(#b4b4b4 0 2px, transparent 2px 4px);
}
.combo {
    position: relative;
    display: flex;
    align-items: center;
    width: 69px;
    height: 23px;
    margin: 0 2px 0 1px;
    background: linear-gradient(90deg, #fff 0, #fff 57px, #f4f4f4 57px);
}
.combo.short {
    width: 57px;
    background: linear-gradient(90deg, #fff 0, #fff 45px, #f4f4f4 45px);
}
.combo.blank {
    width: 56px;
    margin: 0 2px 0 0;
}
.combo.view {
    width: 60px;
    padding-left: 2px;
    background: linear-gradient(90deg, #fff 0, #fff 49px, #f4f4f4 49px);
}
.combo select {
    flex: 1;
    width: 0;
    height: 100%;
    padding: 0 0 0 2px;
    border: none;
    background: none;
    appearance: none;
}
.combo::after {
    content: "";
    position: absolute;
    right: 3px;
    top: 10px;
    border: 3px solid transparent;
    border-top-color: #000;
    border-bottom: none;
}

/* Panel lateral */
.workspace {
    flex: 1;
    display: flex;
    min-height: 0;
}
.sidebar {
    flex: 0 0 170px;
    display: flex;
    flex-direction: column;
    min-width: 0;
    padding: 0 5px 3px 0;
    font-family: "Liberation Sans", "Noto Sans CJK SC", sans-serif;
}
.side-title {
    display: flex;
    align-items: center;
    gap: 9px;
    height: 16px;
    margin-bottom: 1px;
    padding-right: 5px;
    background-color: #0055e5;
    color: #fff;
    font-size: 13px;
}
.side-title svg:first-of-type {
    margin-left: auto;
}
.side-btn {
    height: 22px;
    border: 1px solid #a0a0a0;
    border-left-color: #fff;
    background-color: #f0f0f0;
}
.side-tools {
    height: 27px;
    padding: 6px 0 0 5px;
    border: 2px solid #a0a0a0;
    border-top-width: 1px;
    border-bottom: none;
    background: linear-gradient(#fff, #f0f0f0);
}
.tree {
    flex: 1;
    margin: 0 1px 0 2px;
    padding: 1px 0 0;
    overflow: hidden;
    border: 1px solid #828790;
    background-color: #fff;
    list-style: none;
}
.tree ul {
    margin: 0 0 0 12px;
    padding: 0 0 0 18px;
    border-left: 1px dotted #808080;
    list-style: none;
}
.node, .tree ul li, .selected {
    display: flex;
    align-items: center;
    height: 16px;
    white-space: nowrap;
}
.node {
    padding-left: 7px;
}
.node .exp {
    width: 8px;
    height: 8px;
    margin-right: 8px;
}
.node .icon, .tree ul .icon {
    margin-right: 4px;
}
.tree ul li {
    border-left: 1px dotted #808080;
}
.tree ul li::before {
    content: "";
    width: 10px;
    border-top: 1px dotted #808080;
}
.tree .selected {
    margin-right: 1px;
    background-color: #d9d9d9;
}
.tree ul .selected + .icon {
    margin-right: 0;
}
.node .book {
    margin: 0 0 0 4px;
}
.tree em {
    align-self: flex-start;
    height: 8px;
    background-color: #ffe000;
    font: bold 8px/8px "Liberation Sans", sans-serif;
}
kbd {
    font: 10px/16px "Liberation Mono", monospace;
}

/* Zona de dibujo */
.content {
    flex: 1;
    display: flex;
    flex-direction: column;
    min-width: 0;
    padding-right: 1px;
}
.bar-component {
    margin-right: 67px;
}
.draw-row {
    height: 30px;
    padding: 2px 0 0;
}
.bar-empty {
    width: 31px;
    margin-left: auto;
}
.viewport {
    flex: 1;
    display: block;
    width: 100%;
    min-height: 0;
    background-color: #000;
}
.deg {
    font: 16px "Liberation Sans", sans-serif;
    fill: #e8e8e8;
}
.axis {
    font: 300 14px "Open Sans", sans-serif;
}
.snap-row {
    height: 33px;
    padding-bottom: 3px;
    gap: 0;
}
.snap-row .bar {
    padding-right: 2px;
}
.bar-offset {
    color: #808080;
}
.bar-offset .combo {
    color: #000;
}
.num {
    display: flex;
    align-items: center;
    gap: 3px;
    margin-right: 4px;
}
.spin {
    display: flex;
    align-items: center;
    width: 57px;
    height: 23px;
    padding-right: 4px;
    border: 1px solid #7a7a7a;
}
.spin.wide {
    width: 68px;
}
.spin input {
    flex: 1;
    width: 0;
    padding: 0 11px 0 0;
    border: none;
    background: none;
    text-align: right;
}
.spin i {
    height: 16px;
}
.spin i::before, .spin i::after {
    content: "";
    display: block;
    border: 3px solid transparent;
}
.spin i::before {
    border-bottom-color: #555;
    border-top: none;
    margin-bottom: 10px;
}
.spin i::after {
    border-top-color: #555;
    border-bottom: none;
}
.check {
    display: flex;
    align-items: center;
    gap: 8px;
    margin-right: 5px;
    color: #000;
}
.check input {
    width: 11px;
    height: 11px;
    border: 1px solid #888;
    appearance: none;
}

/* Barra de estado */
.status {
    flex: none;
    display: flex;
    gap: 2px;
    height: 20px;
    background-color: #fff;
}
.status span {
    padding: 1px 1px 0;
    border: 1px solid #d2d2d2;
    border-left-color: #e4e4e4;
    background: linear-gradient(#fff, #f2f2f2);
    white-space: nowrap;
}
.status .st-xy { width: 148px; }
.status .st-floor { width: 78px; }
.status .st-base { width: 98px; }
.status .st-zero { width: 48px; }
.status .st-hint { flex: 1; }
.status .st-fps { width: 70px; }

/* Barra de tareas */
.taskbar {
    flex: none;
    display: flex;
    align-items: center;
    height: 40px;
    background-color: #020b0e;
    color: #fff;
}
.start {
    width: 48px;
    height: 40px;
    background-color: #000;
}
.start svg {
    display: block;
    margin: 0 auto;
}
.search {
    flex: 0 0 344px;
    display: flex;
    align-items: center;
    gap: 4px;
    height: 40px;
    padding: 0 14px 0 8px;
    background-color: #333;
}
.search input {
    flex: 1;
    border: none;
    background: none;
    font-size: 14px;
}
.search input::placeholder {
    color: #a0a0a0;
}
.apps {
    display: flex;
    gap: 1px;
    padding-left: 2px;
}
.apps button {
    width: 48px;
    height: 40px;
    border-bottom: 2px solid transparent;
}
.apps svg {
    display: block;
    width: 24px;
    height: 24px;
    margin: 0 auto;
}
.apps .white {
    color: #fff;
}
.apps .last-tool {
    margin-right: 5px;
}
.apps .run {
    border-bottom-color: #76b9ed;
}
.apps .current {
    background-color: #2f3a3e;
}
.cpu {
    margin-left: auto;
    text-align: center;
    line-height: 17px;
}
.tray {
    display: flex;
    align-items: center;
    gap: 9px;
    margin-left: 20px;
}
.tray b {
    font-weight: normal;
    font-size: 14px;
}
.clock {
    width: 62px;
    margin-left: 17px;
    text-align: center;
    line-height: 19px;
}
.notify {
    position: relative;
    width: 56px;
    height: 40px;
    margin-right: 3px;
    border-right: 1px solid #555;
}
.notify svg {
    display: block;
    margin: 0 auto 0 17px;
}
.notify span {
    position: absolute;
    left: 24px;
    top: 18px;
    width: 18px;
    height: 18px;
    border-radius: 50%;
    background-color: #444;
    color: #fff;
    font-size: 11px;
    line-height: 18px;
    font-weight: bold;
}
```
